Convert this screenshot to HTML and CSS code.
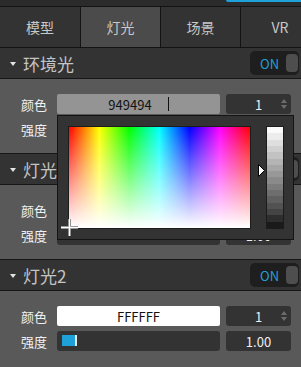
FILE: index.html
```html
<!DOCTYPE html>
<html lang="zh">
<head>
<meta charset="utf-8">
<link rel="stylesheet" href="styles.css">
</head>
<body>
<div class="panel">
  <div class="topbar"><div class="topbar-accent"></div></div>
  <div class="tabs">
    <div class="tab tab-first">模型</div>
    <div class="tab active">灯光</div>
    <div class="tab">场景</div>
    <div class="tab tab-last">VR</div>
  </div>

  <section class="group">
    <div class="group-head">
      <span class="caret"></span>
      <span class="title">环境光</span>
      <div class="toggle"><span>ON</span><i class="knob"></i></div>
    </div>
    <div class="group-body">
      <div class="row">
        <label>颜色</label>
        <div class="field color-field"><span>949494</span><i class="text-caret"></i></div>
        <div class="num">1<span class="spin"><i class="up"></i><i class="down"></i></span></div>
      </div>
      <div class="row">
        <label>强度</label>
        <div class="field slider"><span class="fill"></span><span class="handle"></span></div>
        <div class="num">1.00</div>
      </div>

      <div class="picker">
        <div class="sv"></div>
        <div class="lum"></div>
        <svg class="marker" width="8" height="13" viewBox="0 0 8 13"><polygon points="0.5,0.5 6.5,6.5 0.5,12.5" fill="#fff" stroke="#000" stroke-width="1"/></svg>
        <svg class="cross" width="17" height="17" viewBox="0 0 17 17">
          <path d="M0 8.5H17M8.5 0V17" stroke="#777" stroke-width="3"/>
          <path d="M0 8.5H17M8.5 0V17" stroke="#fff" stroke-width="1.4"/>
        </svg>
      </div>
    </div>
  </section>

  <section class="group">
    <div class="group-head">
      <span class="caret"></span>
      <span class="title">灯光1</span>
      <div class="toggle"><span>ON</span><i class="knob"></i></div>
    </div>
    <div class="group-body">
      <div class="row">
        <label>颜色</label>
        <div class="field color-field white"><span>FFFFFF</span></div>
        <div class="num">1<span class="spin"><i class="up"></i><i class="down"></i></span></div>
      </div>
      <div class="row">
        <label>强度</label>
        <div class="field slider"><span class="fill"></span><span class="handle"></span></div>
        <div class="num">1.00</div>
      </div>
    </div>
  </section>

  <section class="group">
    <div class="group-head">
      <span class="caret"></span>
      <span class="title">灯光2</span>
      <div class="toggle"><span>ON</span><i class="knob"></i></div>
    </div>
    <div class="group-body last">
      <div class="row">
        <label>颜色</label>
        <div class="field color-field white"><span>FFFFFF</span></div>
        <div class="num">1<span class="spin"><i class="up"></i><i class="down"></i></span></div>
      </div>
      <div class="row">
        <label>强度</label>
        <div class="field slider"><span class="fill"></span><span class="handle"></span></div>
        <div class="num">1.00</div>
      </div>
    </div>
  </section>
</div>
</body>
</html>
```

FILE: styles.css
```css
html, body {
  margin: 0;
  padding: 0;
  background: #595959;
}
body {
  font-family: "Noto Sans CJK SC", "Noto Sans", sans-serif;
}
.panel {
  width: 301px;
  height: 367px;
  overflow: hidden;
  background: #595959;
}
.topbar {
  height: 6px;
  background: #2b2b2b;
  border-bottom: 1px solid #131313;
  display: flex;
  justify-content: flex-end;
}
.topbar-accent {
  width: 75px;
  height: 2px;
  background: #1ea0d8;
  border-bottom-left-radius: 2px;
}
.tabs {
  display: flex;
  height: 40px;
  background: #333333;
  border-bottom: 1px solid #131313;
}
.tab {
  flex: 0 0 79px;
  border-right: 1px solid #131313;
  display: flex;
  align-items: center;
  justify-content: center;
  color: #c8c8c8;
  font-size: 14px;
  line-height: 1;
}
.tab-first { flex-basis: 80px; }
.tab-last { flex: 0 0 78px; border-right: none; }
.tab.active { background: #4b4b4b; }

.group-head {
  height: 30px;
  background: #333333;
  border-bottom: 1px solid #161616;
  display: flex;
  align-items: center;
  padding: 0 2px 0 10px;
}
.caret {
  width: 0;
  height: 0;
  border-left: 3px solid transparent;
  border-right: 3px solid transparent;
  border-top: 4px solid #e4e4e4;
  margin: 1px 7px 0 0;
}
.title {
  flex: 1;
  font-size: 17px;
  line-height: 1;
  color: #c4c4c4;
}
.toggle {
  width: 49px;
  height: 24px;
  box-sizing: border-box;
  background: #1e1e1e;
  border-radius: 5px;
  display: flex;
  align-items: center;
  padding: 0 1px 0 10px;
}
.toggle span {
  flex: 1;
  color: #1ea0d8;
  font-size: 13px;
  line-height: 1;
}
.knob {
  width: 12px;
  height: 18px;
  background: #4e4e4e;
  border-radius: 4px;
}

.group-body {
  position: relative;
  height: 75px;
  box-sizing: border-box;
  padding-top: 15px;
  border-bottom: 1px solid #161616;
  display: flex;
  flex-direction: column;
  gap: 5px;
}
.group-body.last {
  border-bottom: none;
  height: auto;
}
.row {
  display: flex;
  align-items: center;
  height: 20px;
  padding-left: 21px;
}
.row label {
  width: 36px;
  font-size: 13px;
  line-height: 1;
  color: #f0f0f0;
}
.field {
  width: 163px;
  height: 20px;
  box-sizing: border-box;
  border-radius: 2px;
}
.color-field {
  background: #949494;
  display: flex;
  align-items: center;
  justify-content: center;
  color: #111;
  font-size: 13px;
  line-height: 1;
}
.color-field.white {
  background: #ffffff;
}
.text-caret {
  width: 1px;
  height: 14px;
  background: #111;
  margin-left: 16px;
}
.slider {
  background: #333333;
  border-radius: 3px;
  padding: 4px 5px;
  display: flex;
}
.fill {
  width: 13px;
  height: 11px;
  background: #1ea0d8;
}
.handle {
  width: 2px;
  height: 11px;
  background: #e6e6e6;
}
.num {
  position: relative;
  width: 65px;
  height: 20px;
  margin-left: 6px;
  background: #333333;
  border-radius: 3px;
  display: flex;
  align-items: center;
  justify-content: center;
  color: #f0f0f0;
  font-size: 13px;
  line-height: 1;
}
.spin {
  position: absolute;
  right: 4px;
  top: 5px;
  display: flex;
  flex-direction: column;
  gap: 2px;
}
.spin i {
  width: 0;
  height: 0;
  border-left: 3px solid transparent;
  border-right: 3px solid transparent;
}
.spin .up { border-bottom: 4px solid #6c6c6c; }
.spin .down { border-top: 4px solid #6c6c6c; }

.picker {
  position: absolute;
  z-index: 10;
  left: 57px;
  top: 36px;
  width: 237px;
  height: 125px;
  box-sizing: border-box;
  background: #333333;
  border: 1px solid #141414;
  padding: 10px 9px 10px 10px;
  display: flex;
  gap: 15px;
}
.sv {
  flex: 0 0 183px;
  height: 103px;
  box-sizing: border-box;
  border: 1px solid #1c1c1c;
  background:
    linear-gradient(to bottom, rgba(255,255,255,0), #ffffff),
    linear-gradient(to right, #ff0000, #ffff00, #00ff00, #00ffff, #0000ff, #ff00ff, #ff0000);
}
.lum {
  flex: 0 0 18px;
  height: 103px;
  box-sizing: border-box;
  border: 1px solid #1c1c1c;
  background: linear-gradient(to bottom,
    #fafafa 0, #fafafa 6.25%,
    #ececec 6.25%, #ececec 12.5%,
    #dedede 12.5%, #dedede 18.75%,
    #d0d0d0 18.75%, #d0d0d0 25%,
    #c2c2c2 25%, #c2c2c2 31.25%,
    #b4b4b4 31.25%, #b4b4b4 37.5%,
    #a6a6a6 37.5%, #a6a6a6 43.75%,
    #989898 43.75%, #989898 50%,
    #8a8a8a 50%, #8a8a8a 56.25%,
    #7c7c7c 56.25%, #7c7c7c 62.5%,
    #6e6e6e 62.5%, #6e6e6e 68.75%,
    #606060 68.75%, #606060 75%,
    #525252 75%, #525252 81.25%,
    #444444 81.25%, #444444 87.5%,
    #2e2e2e 87.5%, #2e2e2e 93.75%,
    #1a1a1a 93.75%, #1a1a1a 100%);
}
.marker {
  position: absolute;
  left: 200px;
  top: 48px;
}
.cross {
  position: absolute;
  left: 3px;
  top: 103px;
}
```
